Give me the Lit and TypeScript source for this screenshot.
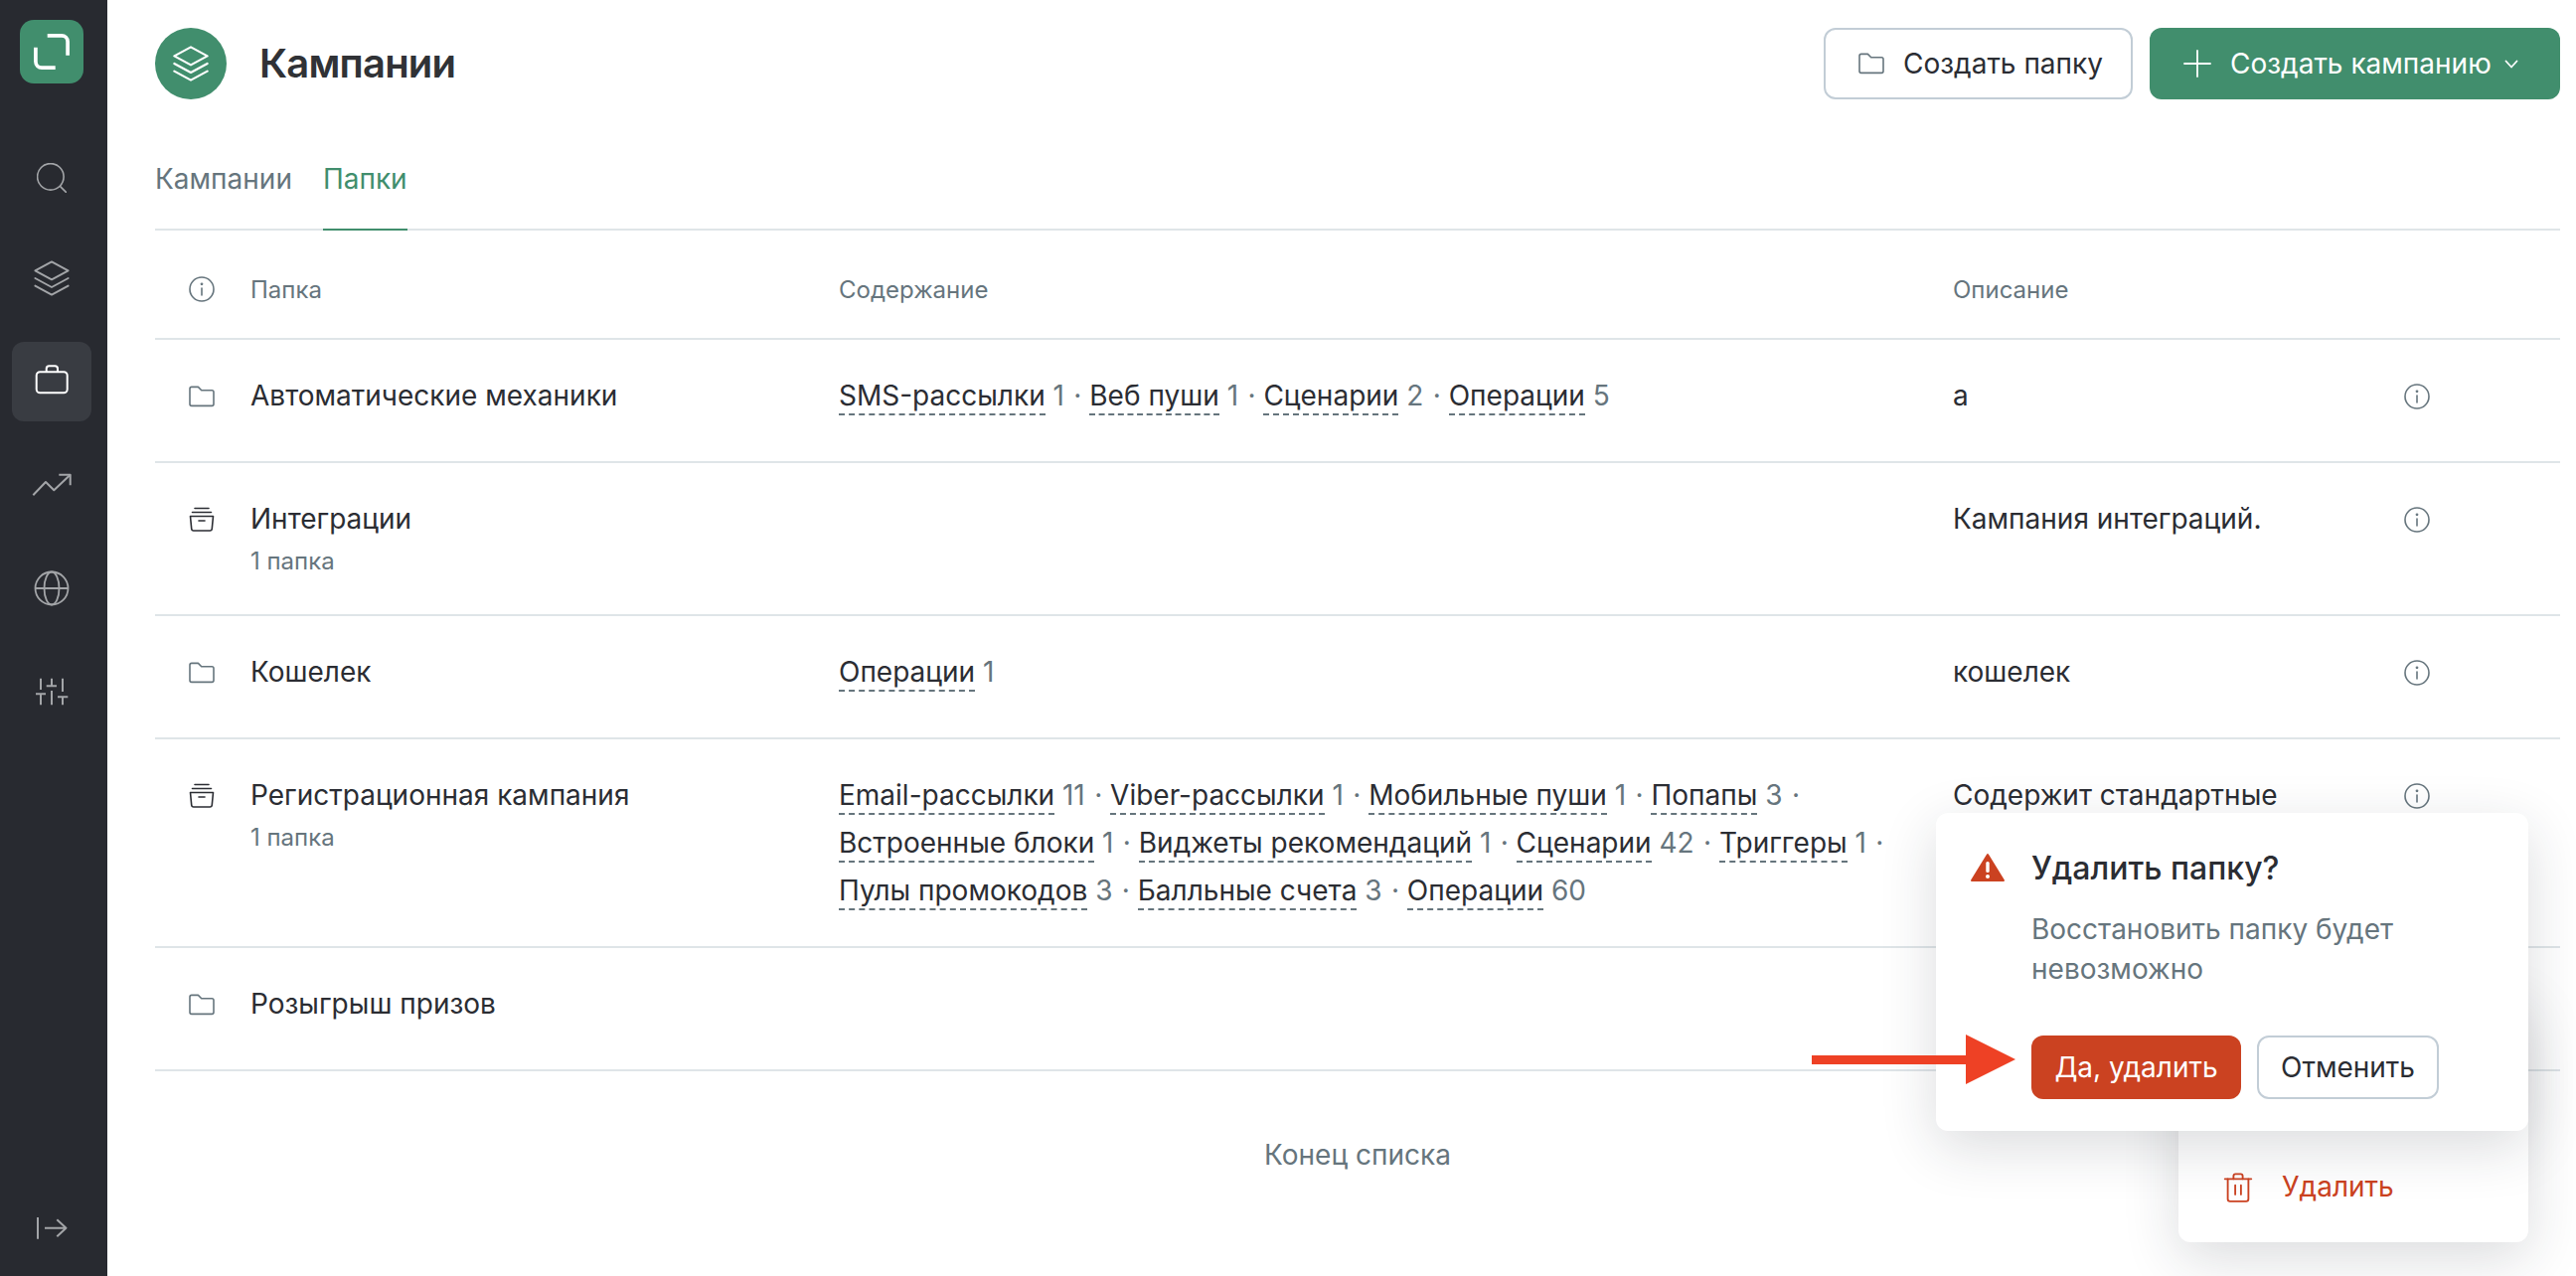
import { LitElement, html, css, svg } from "lit";
import { customElement } from "lit/decorators.js";

const ic = (w: number, body: unknown, cls = "") =>
  html`<svg class=${cls} width=${w} height=${w} viewBox="0 0 26 26" fill="none" stroke="currentColor" stroke-width="1.6" stroke-linecap="round" stroke-linejoin="round">${body}</svg>`;

const side = (x0: number, y0: number, body: unknown) =>
  html`<svg width="70" height="70" viewBox="${x0} ${y0} 70 70" fill="none" stroke="currentColor" stroke-width="2" stroke-linecap="butt" stroke-linejoin="round">${body}</svg>`;

const folderP = svg`<path d="M1 5.2C1 4 1.8 3.4 2.8 3.4h6.6l3.3 3.4h10.5c1 0 1.8.8 1.8 1.8v12c0 1-.8 1.8-1.8 1.8H2.8c-1 0-1.8-.8-1.8-1.8z"/>`;
const infoP = svg`<circle cx="13" cy="13" r="12"/><path d="M13 12v7"/><circle cx="13" cy="7.8" r=".6" fill="currentColor"/>`;
const archiveP = svg`<path d="M6 1.500h14M3.500 5.500h19"/><path d="M1.500 9.500h23l-1.200 12.500c-.1 1.100-1 2-2.100 2H4.800c-1.100 0-2-.9-2.100-2z"/><path d="M10 14h6"/>`;
const layersP = svg`<path d="M13 1 L25 7.500 L13 14 L1 7.500Z"/><path d="M1 13 L13 19.500 L25 13"/><path d="M1 18.500 L13 25 L25 18.500"/>`;

type Cnt = [string, string];
interface Row { name: string; sub?: string; arch?: boolean; items: Cnt[]; desc: string; info: boolean; }

const rows: Row[] = [
  { name: "Автоматические механики", items: [["SMS-рассылки","1"],["Веб пуши","1"],["Сценарии","2"],["Операции","5"]], desc: "а", info: true },
  { name: "Интеграции", sub: "1 папка", arch: true, items: [], desc: "Кампания интеграций.", info: true },
  { name: "Кошелек", items: [["Операции","1"]], desc: "кошелек", info: true },
  { name: "Регистрационная кампания", sub: "1 папка", arch: true, items: [["Email-рассылки","11"],["Viber-рассылки","1"],["Мобильные пуши","1"],["Попапы","3"],["Встроенные блоки","1"],["Виджеты рекомендаций","1"],["Сценарии","42"],["Триггеры","1"],["Пулы промокодов","3"],["Балльные счета","3"],["Операции","60"]], desc: "Содержит стандартные", info: true },
  { name: "Розыгрыш призов", items: [], desc: "", info: false },
];

@customElement("app-root")
export class AppRoot extends LitElement {
  static styles = css`
    :host { display: block; font-family: Inter, "Noto Sans", sans-serif; color: #2b2d33; font-size: 28px; }
    .app { display: flex; height: 1284px; width: 2592px; overflow: hidden; position: relative; background: #fff; }
    .side { width: 108px; flex: none; background: #282a30; display: flex; flex-direction: column; align-items: center; padding: 20px 4px 0 0; box-sizing: border-box; color: #a3a5a8; }
    .logo { width: 64px; height: 64px; border-radius: 14px; background: #418e6d; display: flex; align-items: center; justify-content: center; color: #fff; margin-bottom: 55px; }
    .nav { width: 80px; height: 80px; border-radius: 12px; display: flex; align-items: center; justify-content: center; margin-bottom: 24px; }
    .nav.first { margin-bottom: 21px; }
    .nav.thin svg { stroke-width: 1.4; }
    .nav.on { background: #393c42; color: #fff; }
    .spacer { flex: 1; }
    .collapse { margin-bottom: 8px; }
    .main { flex: 1; padding: 28px 16px 0 48px; min-width: 0; }
    .head { display: flex; align-items: center; height: 72px; }
    .badge { width: 72px; height: 72px; border-radius: 50%; background: #418e6d; color: #fff; display: flex; align-items: center; justify-content: center; margin-right: 33px; }
    h1 { margin: 0; font-size: 40px; font-weight: 600; letter-spacing: -0.8px; line-height: 48px; flex: 1; color: #303236; }
    .btn { height: 72px; box-sizing: border-box; border-radius: 12px; display: flex; align-items: center; }
    .btn.out { border: 2px solid #c2cdd6; padding: 0 0 0 33px; gap: 19px; width: 311px; margin-right: 17px; color: #2b2d33; }
    .btn.out svg { color: #66757d; }
    .btn.pri { background: #418e6d; color: #fff; width: 413px; padding: 0 0 0 34px; }
    .btn.pri .lbl { margin: 0 13px 0 19px; }
    .tabs { display: flex; gap: 31px; border-bottom: 2px solid #dfe5e8; margin-top: 30px; height: 100px; box-sizing: content-box; }
    .tab { color: #66757d; height: 102px; box-sizing: border-box; padding-top: 30px; line-height: 40px; }
    .tab.on { color: #418e6d; border-bottom: 2px solid #418e6d; }
    .row { display: grid; grid-template-columns: 96px 592px 1121px 1fr; border-bottom: 2px solid #dfe5e8; padding: 36px 0 32px; min-height: 124px; box-sizing: border-box; }
    .row.hd { min-height: 0; height: 110px; padding: 10px 0 0; align-items: center; color: #66757d; font-size: 24px; }
    .ico { color: #66757d; padding-top: 7px; height: 26px; margin-left: 34px; display: block; }
    .row.hd .ico { padding-top: 0; }
    .ico.dark { color: #2b2d33; }
    .name { line-height: 40px; color: #2b2d33; }
    .sub { color: #66757d; font-size: 24px; line-height: 42px; padding-top: 2px; }
    .cont { line-height: 48px; margin-top: -4px; max-width: 1060px; color: #66757d; }
    .tag { color: #2b2d33; border-bottom: 2px dashed #66757d; padding-bottom: 1px; white-space: nowrap; }
    .num { margin-right: 1.5px; }
    .desc { line-height: 40px; display: flex; justify-content: space-between; padding-right: 131px; }
    .desc svg { color: #66757d; margin-top: 8px; flex: none; }
    .end { text-align: center; color: #66757d; line-height: 40px; margin-top: 64px; }
    .menu { position: absolute; left: 2192px; top: 1000px; width: 352px; height: 250px; border-radius: 12px; background: #fff; box-shadow: 0 16px 56px rgba(30,40,50,.16); box-sizing: border-box; display: flex; align-items: flex-end; padding: 0 0 36px 45px; gap: 29px; color: #cb4221; }
    .menu span { line-height: 40px; }
    .menu svg { margin-bottom: 4px; }
    .pop { position: absolute; left: 1948px; top: 818px; width: 596px; height: 320px; border-radius: 12px; background: #fff; box-shadow: 0 16px 56px rgba(30,40,50,.16); box-sizing: border-box; display: grid; grid-template-columns: 97px 1fr; padding: 36px 0 0 0; }
    .warn { margin: 4px 0 0 35px; }
    .pt { font-size: 32px; font-weight: 500; line-height: 40px; color: #2b2d33; margin-left: -1px; }
    .pd { color: #66757d; line-height: 40px; margin: 21px 0 0 -1px; }
    .acts { display: flex; gap: 16px; margin: 47px 0 0 -1px; }
    .b { height: 64px; border-radius: 12px; display: flex; align-items: center; justify-content: center; box-sizing: border-box; }
    .b.d { width: 211px; background: #cb4221; color: #fff; }
    .b.c { width: 183px; border: 2px solid #c2cdd6; color: #2b2d33; }
    .arrow { position: absolute; left: 1823px; top: 1041px; }
  `;

  render() {
    return html`<div class="app">
      <aside class="side">
        <div class="logo"><svg width="36" height="36" viewBox="0 0 36 36" fill="none" stroke="currentColor" stroke-width="3.700" stroke-linecap="butt"><path d="M13.700 1.900H28c3.400 0 6.100 2.700 6.100 6.100v13.700"/><path d="M1.900 13.700V28c0 3.400 2.700 6.100 6.100 6.100h13.700"/></svg></div>
        <div class="nav first thin">${ic(30, svg`<circle cx="12" cy="12" r="11.500"/><path d="M20.500 20.500 L25.500 25.500"/>`)}</div>
        <div class="nav thin">${ic(36, layersP)}</div>
        <div class="nav on">${side(-3, -1, svg`<rect x="16.700" y="24.300" width="31" height="21" rx="3.500"/><path d="M26.700 24.300V21c0-1.800 1-2.700 2.700-2.700h5.900c1.700 0 2.700.9 2.700 2.700v3.300"/>`)}</div>
        <div class="nav">${side(-3, -7, svg`<path d="M13.300 38.300 L26 25 L34.300 33.300 L50.700 17.700"/><path d="M39.300 17.700H50.700V28.300"/>`)}</div>
        <div class="nav"><svg width="36" height="36" viewBox="0 0 36 36" fill="none" stroke="currentColor" stroke-width="1.800"><circle cx="18" cy="18" r="16.500"/><ellipse cx="18" cy="18" rx="7.500" ry="16.500"/><path d="M1.500 18h33"/></svg></div>
        <div class="nav">${side(-3, 1, svg`<path d="M21 22.700V34M16 38.300H26M21 38.300V49.300M32 22.700V30.300M26.700 30.300H37M32 35V49.300M43 22.700V36M38 41.300H48.300M43 41.300V49.300"/>`)}</div>
        <div class="spacer"></div>
        <div class="nav collapse">${side(-3, 1, svg`<path d="M18 25V46.700"/><path d="M25 35.700H46.500M37.300 27.300 L46.500 35.700 L37.300 44.300"/>`)}</div>
      </aside>
      <main class="main">
        <div class="head">
          <div class="badge">${ic(36, layersP)}</div>
          <h1>Кампании</h1>
          <div class="btn out">${ic(26, folderP)}<span>Создать папку</span></div>
          <div class="btn pri">
            <svg width="28" height="28" viewBox="0 0 28 28" stroke="currentColor" stroke-width="1.800" stroke-linecap="round"><path d="M14 1v26M1 14h26"/></svg>
            <span class="lbl">Создать кампанию</span>
            <svg width="14" height="9" viewBox="0 0 14 9" fill="none" stroke="currentColor" stroke-width="1.800" stroke-linecap="round" stroke-linejoin="round"><path d="M1.500 1.500l5.500 6 5.500-6"/></svg>
          </div>
        </div>
        <div class="tabs"><div class="tab">Кампании</div><div class="tab on">Папки</div></div>
        <div class="row hd">
          <span class="ico">${ic(26, infoP)}</span>
          <span>Папка</span>
          <span>Содержание</span>
          <span>Описание</span>
        </div>
        ${rows.map((r) => html`<div class="row">
          <span class="ico ${r.arch ? "dark" : ""}">${ic(26, r.arch ? archiveP : folderP)}</span>
          <div><div class="name">${r.name}</div>${r.sub ? html`<div class="sub">${r.sub}</div>` : ""}</div>
          <div class="cont">${r.items.map((it, i) => html`<span class="tag">${it[0]}</span> <span class="num">${it[1]}</span>${i < r.items.length - 1 ? " · " : ""}`)}</div>
          <div class="desc"><span>${r.desc}</span>${r.info ? ic(26, infoP) : ""}</div>
        </div>`)}
        <div class="end">Конец списка</div>
      </main>
      <div class="menu">${ic(30, svg`<path d="M1.500 5.500h23"/><path d="M4 5.500V23c0 1.200.8 2 2 2h14c1.200 0 2-.8 2-2V5.500"/><path d="M9 5.500V3c0-1 .8-1.800 1.800-1.800h4.400c1 0 1.800.8 1.800 1.800v2.500"/><path d="M10.500 11v8M15.500 11v8"/>`)}<span>Удалить</span></div>
      <div class="pop">
        <svg class="warn" width="34" height="30" viewBox="0 0 34 30"><path fill="#cb4221" stroke="#cb4221" stroke-width="2" stroke-linejoin="round" d="M17 2 L33 28 H1 Z"/><rect x="15.300" y="9" width="3.400" height="11" rx="1.500" fill="#fff"/><circle cx="17" cy="24" r="2" fill="#fff"/></svg>
        <div>
          <div class="pt">Удалить папку?</div>
          <div class="pd">Восстановить папку будет<br />невозможно</div>
          <div class="acts"><div class="b d">Да, удалить</div><div class="b c">Отменить</div></div>
        </div>
      </div>
      <svg class="arrow" width="206" height="50" viewBox="0 0 206 50"><path fill="#ee4125" d="M0 21h155V0l50 25-50 25V30H0z"/></svg>
    </div>`;
  }
}
